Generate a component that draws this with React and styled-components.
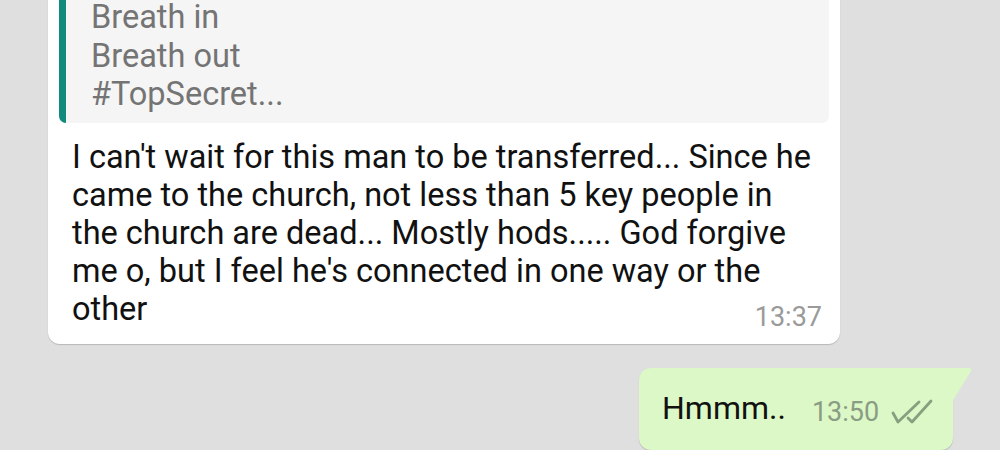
import React from 'react';
import styled, { createGlobalStyle } from 'styled-components';

const GlobalStyle = createGlobalStyle`
  html, body {
    margin: 0;
    padding: 0;
    background: #dfdfdf;
  }
  body {
    width: 1000px;
    height: 450px;
    overflow: hidden;
    font-family: Roboto, "Noto Sans", Arial, sans-serif;
  }
`;

const Chat = styled.div`
  display: flex;
  flex-direction: column;
  width: 1000px;
  height: 450px;
  overflow: hidden;
`;

const Bubble = styled.div`
  box-sizing: border-box;
  background: ${p => (p.$out ? '#dcf8c6' : '#ffffff')};
  border-radius: 12px;
  box-shadow: 0 1px 1px rgba(0, 0, 0, 0.18);
  position: relative;
`;

const Incoming = styled(Bubble)`
  margin: -24px 0 0 48px;
  width: 792px;
  padding: 11px 11px 16px 11px;
  border-top-left-radius: 0;
  border-top-right-radius: 0;
`;

const Quote = styled.div`
  background: #f5f5f5;
  border-left: 7px solid #0f8a7b;
  border-radius: 7px;
  padding: 11px 16px 9px 25px;
  color: #747474;
  font-size: 32.5px;
  line-height: 38.5px;
`;

const Body = styled.div`
  padding: 15px 15px 0 13px;
  color: #111;
  font-size: 32.5px;
  line-height: 38px;
`;

const Time = styled.span`
  float: right;
  font-size: 27px;
  line-height: 30px;
  color: #9a9a9a;
  margin-top: 12px;
  margin-right: -8px;
  margin-bottom: -10px;
`;

const Outgoing = styled(Bubble)`
  align-self: flex-start;
  margin: 24px 0 0 639px;
  width: 314px;
  height: 82px;
  border-top-right-radius: 0;
  display: flex;
  align-items: center;
  padding: 0 0 0 23px;
`;

const Tail = styled.svg`
  position: absolute;
  top: 0;
  right: -19px;
`;

const OutText = styled.span`
  font-size: 32px;
  color: #111;
  margin-top: -2px;
`;

const Meta = styled.span`
  display: flex;
  align-items: center;
  gap: 12px;
  margin-left: 26px;
  font-size: 27px;
  color: #8a9c84;
  margin-top: 6px;
`;

function Ticks() {
  return (
    <svg width="42" height="26" viewBox="0 0 42 26" fill="none" stroke="#86a07f" strokeWidth="2.8" strokeLinecap="round" strokeLinejoin="round">
      <path d="M2 14 L7 23 L28 3" />
      <path d="M17 19 L21 23 L40 2" />
    </svg>
  );
}

export default function App() {
  return (
    <Chat>
      <GlobalStyle />
      <Incoming>
        <Quote>
          Breath in
          <br />
          Breath out
          <br />
          #TopSecret...
        </Quote>
        <Body>
          I can't wait for this man to be transferred... Since he came to the church, not less than 5 key people in the church are dead... Mostly hods..... God forgive me o, but I feel he's connected in one way or the other
          <Time>13:37</Time>
        </Body>
      </Incoming>
      <Outgoing $out>
        <Tail width="20" height="34" viewBox="0 0 20 34">
          <path d="M0 0 L17 0 Q20 0 19 3 L0 34 Z" fill="#dcf8c6" />
        </Tail>
        <OutText>Hmmm..</OutText>
        <Meta>
          13:50
          <Ticks />
        </Meta>
      </Outgoing>
    </Chat>
  );
}
